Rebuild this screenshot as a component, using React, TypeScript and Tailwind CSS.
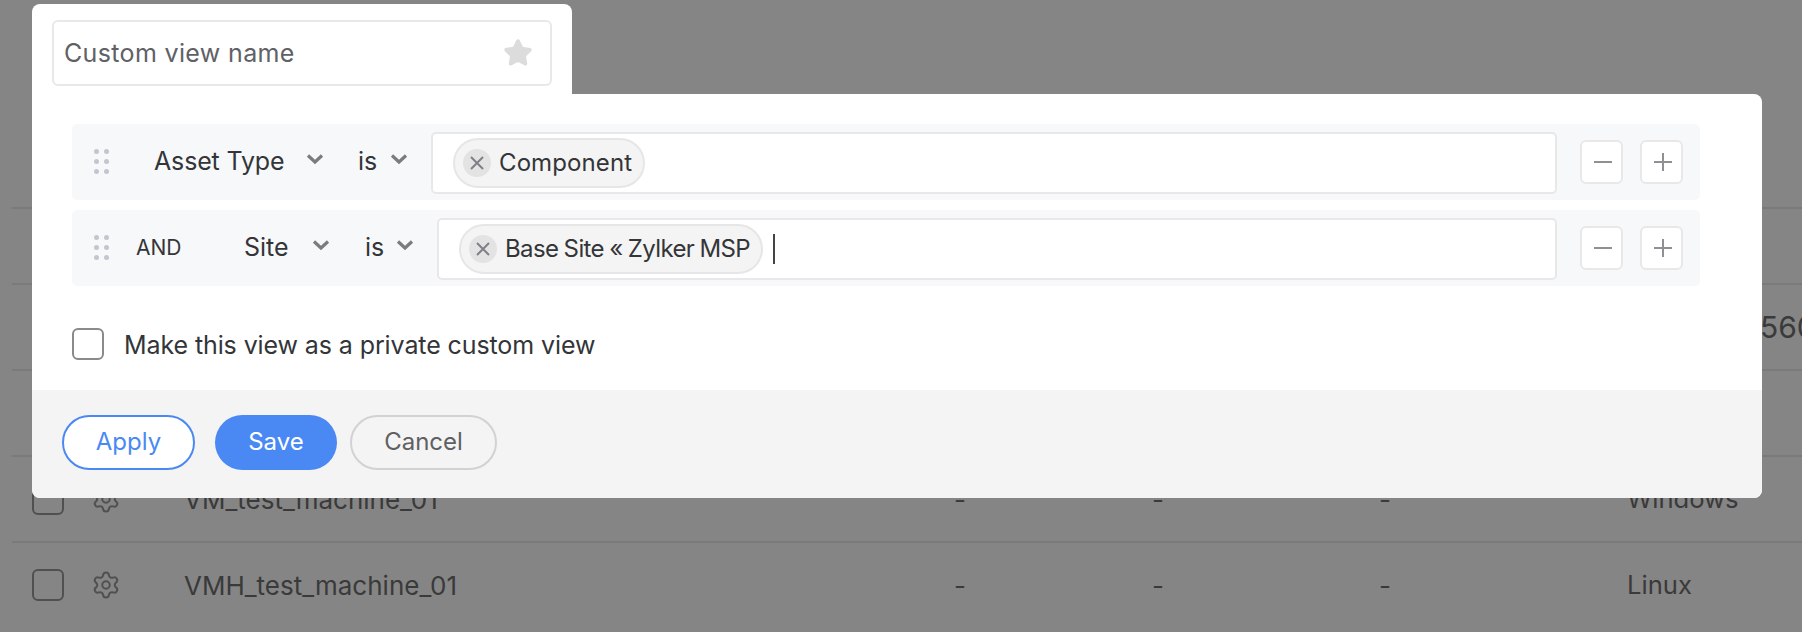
import { Settings, Star } from 'lucide-react'

const tableRows = [
  { name: '', dash: '', os: '', tail: '560' },
  { name: '', dash: '', os: '', tail: '' },
  { name: 'VM_test_machine_01', dash: '-', os: 'Windows', tail: '' },
  { name: 'VMH_test_machine_01', dash: '-', os: 'Linux', tail: '' },
]

function Chevron() {
  return (
    <svg width="18" height="12" viewBox="0 0 18 12" className="shrink-0 mb-[6px]">
      <path d="M2 2.5 L9 9 L16 2.5" fill="none" stroke="#7b7c80" strokeWidth="3.2" />
    </svg>
  )
}

function DragDots() {
  return (
    <div className="grid grid-cols-2 gap-x-[5px] gap-y-[5px] shrink-0 mb-[2px]">
      {[0, 1, 2, 3, 4, 5].map((i) => (
        <span key={i} className="w-[5px] h-[5px] rounded-full bg-[#c3c6ce]" />
      ))}
    </div>
  )
}

function Chip({ label, tight }: { label: string; tight?: boolean }) {
  return (
    <div className="flex items-center h-[50px] pl-[8px] pr-[11px] rounded-full border-2 border-[#e6e6e6] bg-[#f4f4f4]">
      <span className="flex items-center justify-center w-[28px] h-[28px] rounded-full bg-[#e3e3e3]">
        <svg width="16" height="16" viewBox="0 0 16 16">
          <path d="M2 2 L14 14 M14 2 L2 14" stroke="#7f8088" strokeWidth="2" />
        </svg>
      </span>
      <span
        className={
          tight
            ? 'ml-[8px] text-[24px] text-[#333538] tracking-[-0.6px] [word-spacing:-1px] whitespace-nowrap'
            : 'ml-[8px] text-[24px] text-[#333538] tracking-[0.1px] whitespace-nowrap'
        }
      >
        {label}
      </span>
    </div>
  )
}

function IconButton({ plus }: { plus?: boolean }) {
  return (
    <button className="flex items-center justify-center w-[43px] h-[44px] rounded-[6px] border-2 border-[#e8e8e8] bg-white">
      <svg width="20" height="20" viewBox="0 0 20 20" className="ml-[2px]">
        <path d={plus ? 'M1 10 H19 M10 1 V19' : 'M1 10 H19'} stroke="#8f9094" strokeWidth="2" />
      </svg>
    </button>
  )
}

export default function App() {
  return (
    <div className="relative w-[1802px] h-[632px] overflow-hidden bg-[#858585] font-['Inter','Liberation_Sans',sans-serif]">
      {/* table behind the overlay */}
      <div className="pt-[207px] pl-[12px] text-[26px] text-[#3a3a3a]">
        <div className="h-[76px] border-t-2 border-[#7a7a7a]" />
        {tableRows.map((row, i) => (
          <div key={i} className="flex items-center h-[86px] border-t-2 border-[#7a7a7a]">
            <span className="ml-[20px] w-[32px] h-[32px] rounded-[6px] border-2 border-[#505050] shrink-0" />
            <Settings size={30} strokeWidth={1.6} className="ml-[27px] text-[#505050] shrink-0" />
            <span className="ml-[63px] w-[770px] shrink-0">{row.name}</span>
            <span className="w-[198px] shrink-0">{row.dash}</span>
            <span className="w-[227px] shrink-0">{row.dash}</span>
            <span className="w-[248px] shrink-0">{row.dash}</span>
            <span className="shrink-0 w-[131px] text-[25.6px] text-[#3a3a3a]">{row.os}</span>
            <span className="shrink-0 text-[30px] ml-[2px]">{row.tail}</span>
          </div>
        ))}
      </div>

      {/* custom view editor */}
      <div className="absolute left-[32px] top-[4px] w-[1730px]">
        <div className="w-[540px] h-[90px] rounded-t-[8px] bg-white pt-[16px] pl-[20px]">
          <div className="flex items-center justify-between w-[500px] h-[66px] rounded-[6px] border-2 border-[#e8e8e8] pl-[10px] pr-[17px]">
            <span className="mt-[2px] text-[25px] text-[#606165] tracking-[0.35px]">Custom view name</span>
            <Star size={30} fill="#dcdcdc" stroke="#dcdcdc" strokeWidth={2} />
          </div>
        </div>
        <div className="rounded-b-[8px] rounded-tr-[8px] bg-white overflow-hidden">
          <div className="pt-[30px] pl-[40px] pr-[62px] h-[296px]">
            {/* first condition */}
            <div className="flex items-center h-[76px] rounded-[5px] bg-[#f7f8fa] pl-[22px] pr-[17px]">
              <DragDots />
              <span className="ml-[45px] w-[129px] text-[25px] text-[#333538] tracking-[-0.15px] whitespace-nowrap">Asset Type</span>
              <span className="ml-[23px]"><Chevron /></span>
              <span className="ml-[34px] w-[18px] text-[25px] text-[#333538]">is</span>
              <span className="ml-[14px]"><Chevron /></span>
              <div className="flex items-center mt-[2px] ml-[23px] w-[1126px] h-[62px] rounded-[5px] border-2 border-[#e8e8e8] bg-white pl-[20px]">
                <Chip label="Component" />
              </div>
              <div className="flex gap-[17px] ml-[23px]">
                <IconButton />
                <IconButton plus />
              </div>
            </div>
            {/* second condition */}
            <div className="flex items-center h-[76px] mt-[10px] rounded-[5px] bg-[#f7f8fa] pl-[22px] pr-[17px]">
              <DragDots />
              <span className="ml-[27px] w-[82px] text-[21px] text-[#333538]">AND</span>
              <span className="ml-[26px] w-[46px] text-[25px] text-[#333538]">Site</span>
              <span className="ml-[22px]"><Chevron /></span>
              <span className="ml-[35px] w-[18px] text-[25px] text-[#333538]">is</span>
              <span className="ml-[13px]"><Chevron /></span>
              <div className="flex items-center mt-[2px] ml-[23px] w-[1120px] h-[62px] rounded-[5px] border-2 border-[#e8e8e8] bg-white pl-[20px]">
                <Chip label="Base Site « Zylker MSP" tight />
                <span className="ml-[10px] w-[2px] h-[30px] bg-[#444]" />
              </div>
              <div className="flex gap-[17px] ml-[23px]">
                <IconButton />
                <IconButton plus />
              </div>
            </div>
            <label className="flex items-start mt-[42px]">
              <span className="w-[32px] h-[32px] rounded-[6px] border-2 border-[#8a8a8a]" />
              <span className="ml-[20px] -mt-[1px] text-[25px] text-[#333538] tracking-[-0.1px]">Make this view as a private custom view</span>
            </label>
          </div>
          <div className="flex items-center h-[108px] bg-[#f4f4f4] pl-[30px] pb-[4px]">
            <button className="w-[133px] h-[55px] rounded-full border-2 border-[#4a89f3] bg-white text-[24px] text-[#4a89f3]">Apply</button>
            <button className="ml-[20px] w-[122px] h-[55px] rounded-full bg-[#4a89f3] text-[24px] text-white">Save</button>
            <button className="ml-[13px] w-[147px] h-[55px] rounded-full border-2 border-[#d2d2d2] text-[24px] text-[#5f6063]">Cancel</button>
          </div>
        </div>
      </div>
    </div>
  )
}
